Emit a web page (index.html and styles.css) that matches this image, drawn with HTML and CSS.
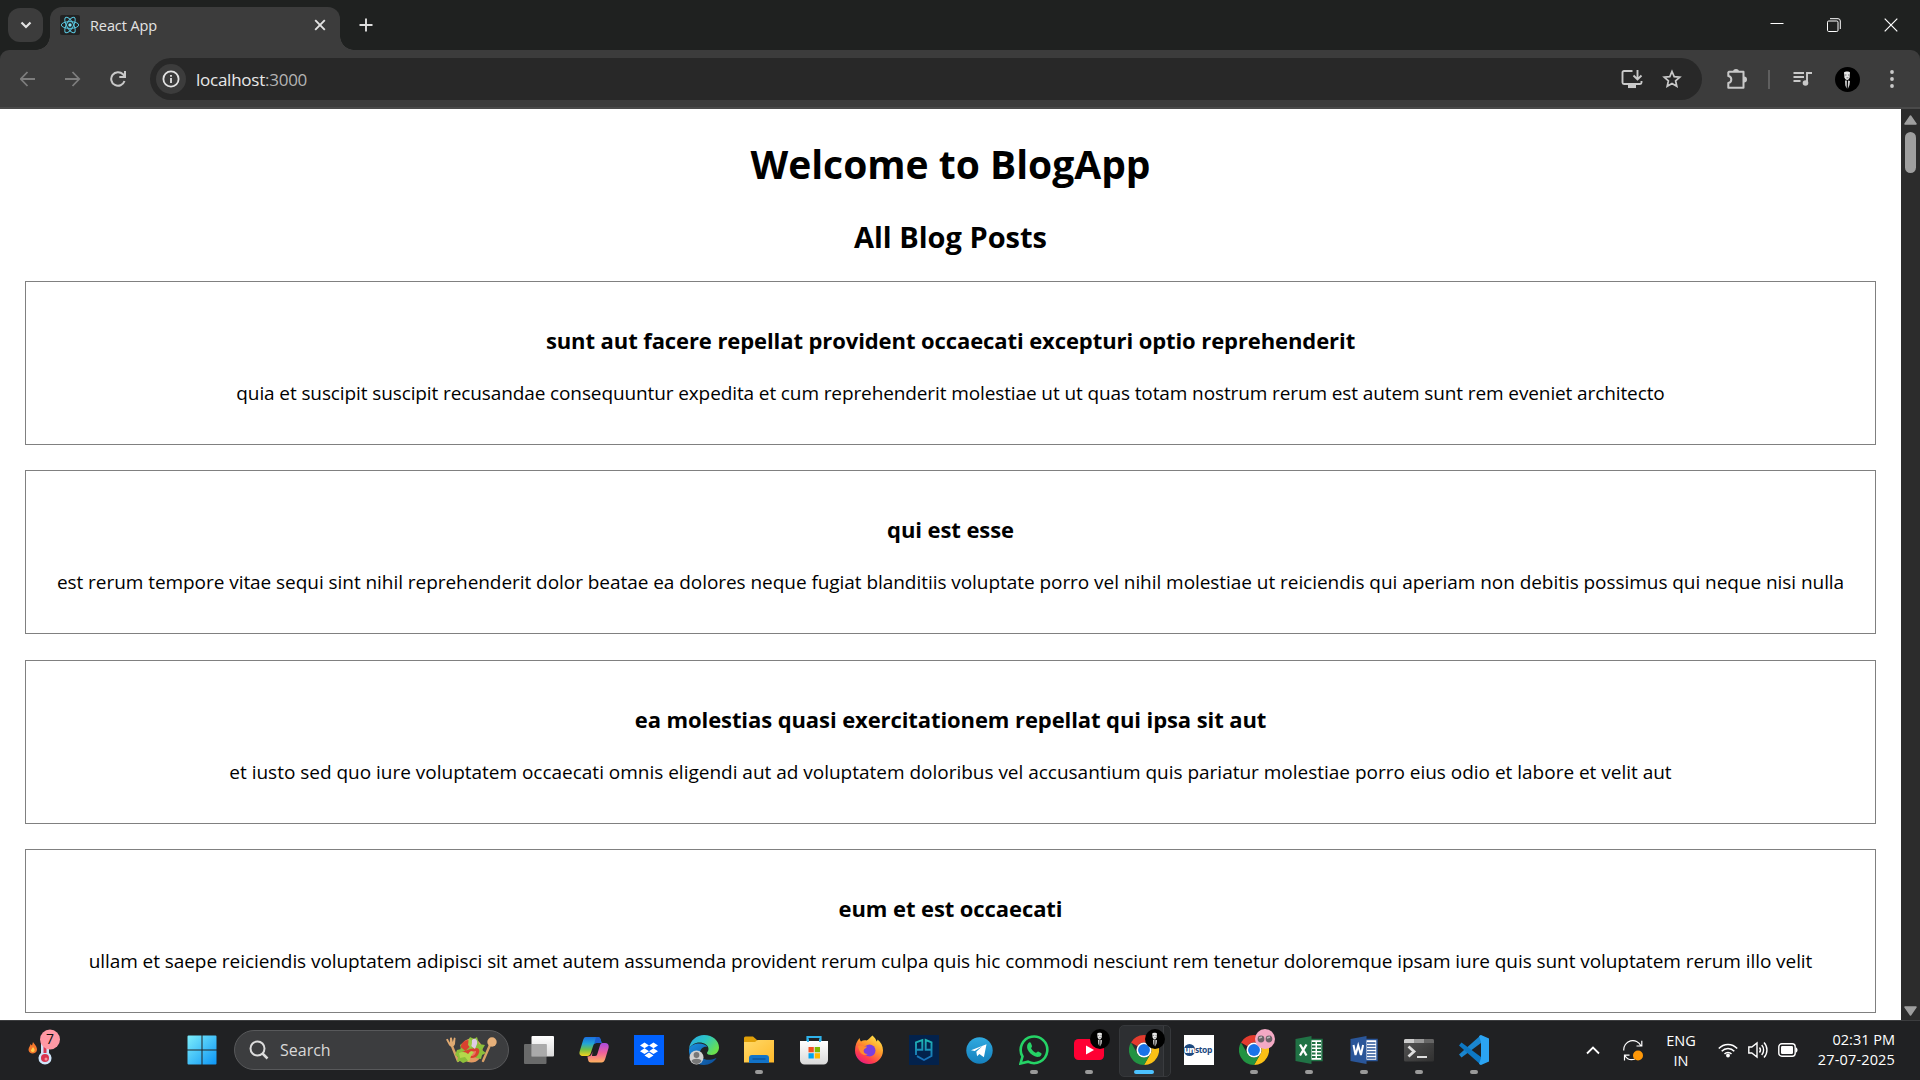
FILE: index.html
```html
<!DOCTYPE html>
<html lang="en">
<head>
<meta charset="utf-8">
<title>React App</title>
<link rel="stylesheet" href="styles.css">
</head>
<body>
<svg class="defs" width="0" height="0" aria-hidden="true">
  <defs>
    <linearGradient id="win" gradientUnits="userSpaceOnUse" x1="0" y1="0" x2="30" y2="30"><stop offset="0" stop-color="#7ff0fb"/><stop offset="1" stop-color="#0a93f5"/></linearGradient>
    <linearGradient id="cpA" x1="0" y1="0" x2="0" y2="1"><stop offset="0" stop-color="#1b6fe0"/><stop offset=".35" stop-color="#22a5d8"/><stop offset=".65" stop-color="#6cc04a"/><stop offset="1" stop-color="#f6d21d"/></linearGradient>
    <linearGradient id="cpB" x1="0" y1="0" x2="0" y2="1"><stop offset="0" stop-color="#a94be0"/><stop offset=".5" stop-color="#f0609a"/><stop offset="1" stop-color="#ffb25e"/></linearGradient>
    <linearGradient id="edA" x1="0" y1="0" x2="1" y2=".6"><stop offset="0" stop-color="#2aa6e8"/><stop offset=".5" stop-color="#2cc5c4"/><stop offset="1" stop-color="#6be04c"/></linearGradient>
    <linearGradient id="edB" x1="0" y1="0" x2="1" y2="1"><stop offset="0" stop-color="#1b8fe0"/><stop offset="1" stop-color="#0c4a94"/></linearGradient>
    <linearGradient id="fold" x1="0" y1="0" x2="1" y2="1"><stop offset="0" stop-color="#ffd968"/><stop offset="1" stop-color="#ffb92a"/></linearGradient>
    <linearGradient id="white" x1="0" y1="0" x2="0" y2="1"><stop offset="0" stop-color="#fff"/><stop offset="1" stop-color="#d9d9d9"/></linearGradient>
    <linearGradient id="ff" x1=".8" y1="0" x2=".2" y2="1"><stop offset="0" stop-color="#ffe94a"/><stop offset=".4" stop-color="#ff9a2b"/><stop offset=".75" stop-color="#ff3d4d"/><stop offset="1" stop-color="#e3158c"/></linearGradient>
    <linearGradient id="tg" x1="0" y1="0" x2="0" y2="1"><stop offset="0" stop-color="#2faae0"/><stop offset="1" stop-color="#1580bd"/></linearGradient>
    <linearGradient id="pg" gradientUnits="userSpaceOnUse" x1="0" y1="4" x2="0" y2="26"><stop offset="0" stop-color="#1fb8b4"/><stop offset="1" stop-color="#1668b8"/></linearGradient>
    <linearGradient id="term" x1="0" y1="0" x2="1" y2="1"><stop offset="0" stop-color="#555"/><stop offset="1" stop-color="#303030"/></linearGradient>
    <symbol id="chrome" viewBox="0 0 48 48">
      <path fill="#e33b2e" d="M24 0A24 24 0 0 1 44.8 12H24A12 12 0 0 0 13.6 18L3.2 12A24 24 0 0 1 24 0z"/>
      <path fill="#fbc116" d="M44.8 12A24 24 0 0 1 24 48L34.4 30A12 12 0 0 0 34.4 18L30 12z"/>
      <path fill="#229342" d="M3.2 12 13.6 30A12 12 0 0 0 34.4 30L24 48A24 24 0 0 1 3.2 12z"/>
      <circle cx="24" cy="24" r="12" fill="#fff"/><circle cx="24" cy="24" r="9.5" fill="#1a73e8"/>
    </symbol>
    <symbol id="person" viewBox="0 0 25 25">
      <circle cx="12.5" cy="12.5" r="12.5" fill="#000"/>
      <path fill="#e8e8e8" d="M9 5.500c1-1.200 5.200-1.200 6 0l-.3 4.800c-.4 1.500-1.400 2.700-2.500 2.700s-2.500-1.200-2.800-2.700z"/>
      <path stroke="#444" stroke-width=".7" d="M9.500 8h2M13 8h1.500M11.500 10.800h2"/>
      <path fill="#d0d0d0" d="M10 13.500h1.900l-.2 8-1.400-3zM13 13.500l2 .5-.5 4-1.700 4z"/>
    </symbol>
  </defs>
</svg>
<div class="screen">
  <header class="tabstrip">
    <button class="tab-search" aria-label="Search tabs"><svg width="12" height="8" viewBox="0 0 12 8" fill="none" stroke="#e3e3e3" stroke-width="2.200"><path d="M1.500 1.500 6 6l4.500-4.500"/></svg></button>
    <div class="tab">
      <svg class="favicon" width="20" height="20" viewBox="0 0 20 20"><rect width="20" height="20" rx="2" fill="#222"/><g fill="none" stroke="#58c4dc" stroke-width="1"><ellipse cx="10" cy="10" rx="8.700" ry="3.400"/><ellipse cx="10" cy="10" rx="8.700" ry="3.400" transform="rotate(60 10 10)"/><ellipse cx="10" cy="10" rx="8.700" ry="3.400" transform="rotate(120 10 10)"/></g><circle cx="10" cy="10" r="1.700" fill="#7de3f7"/></svg>
      <span class="tab-title">React App</span>
      <svg width="12" height="12" viewBox="0 0 12 12" stroke="#e3e3e3" stroke-width="1.900"><path d="M1.200 1.200l9.600 9.600M10.800 1.200l-9.600 9.600"/></svg>
    </div>
    <svg class="plus" width="14" height="14" viewBox="0 0 14 14" stroke="#dedede" stroke-width="1.900"><path d="M7 .5v13M.5 7h13"/></svg>
    <div class="window-buttons">
      <svg width="14" height="14" viewBox="0 0 14 14" stroke="#fff"><path d="M.5 5.500h13"/></svg>
      <svg width="14" height="14" viewBox="0 0 14 14" fill="none" stroke="#fff"><rect x=".5" y="3" width="10.500" height="10.500" rx="1.200"/><path d="M3 .7h8a2.300 2.300 0 0 1 2.300 2.300v8"/></svg>
      <svg width="14" height="14" viewBox="0 0 14 14" stroke="#fff" stroke-width="1.200"><path d="M.7.7l12.600 12.600M13.300.7.7 13.300"/></svg>
    </div>
  </header>
  <div class="toolbar">
    <div class="nav">
      <svg width="16" height="16" viewBox="0 0 16 16" fill="none" stroke="#7d7d7d" stroke-width="1.800"><path d="M15 8H1M7.500 1 .8 8l6.700 7"/></svg>
      <svg width="16" height="16" viewBox="0 0 16 16" fill="none" stroke="#7d7d7d" stroke-width="1.800"><path d="M0 8h14M7.500 1l6.700 7-6.700 7"/></svg>
      <svg width="16" height="16" viewBox="0 0 16 16" fill="none" stroke="#c9c9c9" stroke-width="2"><path d="M14.500 10A6.800 6.800 0 1 1 13 3.300L15 5.500M15 0v6H9.300"/></svg>
    </div>
    <div class="omnibox">
      <span class="info"><svg width="18" height="18" viewBox="0 0 18 18" fill="none" stroke="#e3e3e3" stroke-width="1.800"><circle cx="9" cy="9" r="7.600"/><path d="M9 8v5M9 5v1.800"/></svg></span>
      <span class="url">localhost<span class="port">:3000</span></span>
      <svg class="install" width="22" height="20" viewBox="0 0 22 20" fill="none" stroke="#c9c9c9" stroke-width="1.900"><path d="M11.500 2H3a1.500 1.500 0 0 0-1.500 1.500v10A1.500 1.500 0 0 0 3 15h16a1.500 1.500 0 0 0 1.500-1.500V12M16.500 1v8.500M12.500 6.500l4 4 4-4"/><path d="M7 17.300h8" stroke-width="3.500"/></svg>
      <svg class="star" width="20" height="20" viewBox="0 0 20 20" fill="none" stroke="#c9c9c9" stroke-width="1.700"><path d="M10 2.500l2.200 5.100 5.600.5-4.200 3.700 1.200 5.500-4.800-2.900-4.800 2.900 1.200-5.500L2.200 8.100l5.600-.5z"/></svg>
    </div>
    <svg class="puzzle" width="22" height="22" viewBox="0 0 22 22"><path d="M3 3.800h14.500v16H2.300V15c4-.8 4-6.200 0-7V4.500z" fill="none" stroke="#c9c9c9" stroke-width="2" stroke-linejoin="round"/><path d="M7 4a3 3 0 0 1 6 0zM18 8.500a3 3 0 0 1 0 6z" fill="#c9c9c9"/></svg>
    <span class="divider"></span>
    <svg class="queue" width="20" height="16" viewBox="0 0 20 16" fill="none" stroke="#c9c9c9" stroke-width="1.900"><path d="M.5 2h10.500M.5 6h10.500M.5 10h7M14 12V2h5"/><circle cx="12.500" cy="12" r="2.800" fill="#c9c9c9" stroke="none"/></svg>
    <svg class="avatar" width="25" height="25"><use href="#person"/></svg>
    <svg class="menu" width="4" height="18" viewBox="0 0 4 18" fill="#c9c9c9"><circle cx="2" cy="2" r="1.900"/><circle cx="2" cy="9" r="1.900"/><circle cx="2" cy="16" r="1.900"/></svg>
  </div>
  <div class="viewport">
    <main class="page">
      <h1>Welcome to BlogApp</h1>
      <h2>All Blog Posts</h2>
      <article class="post"><h3 class="snug">sunt aut facere repellat provident occaecati excepturi optio reprehenderit</h3><p class="tight">quia et suscipit suscipit recusandae consequuntur expedita et cum reprehenderit molestiae ut ut quas totam nostrum rerum est autem sunt rem eveniet architecto</p></article>
      <article class="post"><h3 class="snug">qui est esse</h3><p class="close">est rerum tempore vitae sequi sint nihil reprehenderit dolor beatae ea dolores neque fugiat blanditiis voluptate porro vel nihil molestiae ut reiciendis qui aperiam non debitis possimus qui neque nisi nulla</p></article>
      <article class="post"><h3 class="snug">ea molestias quasi exercitationem repellat qui ipsa sit aut</h3><p class="loose">et iusto sed quo iure voluptatem occaecati omnis eligendi aut ad voluptatem doloribus vel accusantium quis pariatur molestiae porro eius odio et labore et velit aut</p></article>
      <article class="post"><h3 class="snug">eum et est occaecati</h3><p class="near">ullam et saepe reiciendis voluptatem adipisci sit amet autem assumenda provident rerum culpa quis hic commodi nesciunt rem tenetur doloremque ipsam iure quis sunt voluptatem rerum illo velit</p></article>
    </main>
    <div class="scrollbar">
      <svg width="13" height="10" viewBox="0 0 13 10"><path d="M6.500 1 12 9H1z" fill="#9f9f9f" stroke="#9f9f9f" stroke-linejoin="round" stroke-width="1.500"/></svg>
      <span class="thumb"></span>
      <svg class="down" width="13" height="10" viewBox="0 0 13 10"><path d="M6.500 9 12 1H1z" fill="#9f9f9f" stroke="#9f9f9f" stroke-linejoin="round" stroke-width="1.500"/></svg>
    </div>
  </div>
  <footer class="taskbar">
    <div class="widgets">
      <svg width="34" height="38" viewBox="0 0 34 38">
        <path d="M5 13c1 2 4 4 4 7.500A4.300 4.300 0 0 1 .5 21c0-3 2-4 2-6l1.500 1.500z" fill="#f4772d"/><path d="M5 18c1 1.500 2 2.500 1.500 4a2 2 0 0 1-3.700-.5z" fill="#ffcf4a"/>
        <path d="M13 10h8v14a6.500 6.500 0 1 1-8 0z" fill="#cfe5fa"/><path d="M15.500 10h3v14h-3z" fill="#d8344f"/><circle cx="17" cy="29" r="4" fill="#d8344f"/><circle cx="18" cy="30" r="1.500" fill="#f3909a"/>
        <circle cx="22" cy="10.500" r="10" fill="#ff98a4"/>
      </svg>
      <span class="count">7</span>
    </div>
    <div class="slot"><svg width="30" height="30" viewBox="0 0 30 30" fill="url(#win)"><path d="M.5 1.500a1 1 0 0 1 1-1h13v14H.500zM15.500.5h13a1 1 0 0 1 1 1v13h-14zM.5 15.500h14v14h-13a1 1 0 0 1-1-1zM15.500 15.500h14v13a1 1 0 0 1-1 1h-13z"/></svg></div>
    <div class="search">
      <svg width="20" height="20" viewBox="0 0 20 20" fill="none" stroke="#dcdcdc" stroke-width="2"><circle cx="8.500" cy="8.500" r="7"/><path d="M13.500 13.500l5 5" stroke-width="2.500"/></svg>
      <span>Search</span>
      <svg class="salad" width="52" height="28" viewBox="0 0 52 28">
        <g stroke="#d9a066" stroke-width="2.400" fill="#e0aa72" stroke-linecap="round"><path d="M7 10l6 15M45 9l-7 16"/></g>
        <path d="M1 3.500l1.800-.7 2 4 .2-5 1.800-.3 1 4.500L9 1.500l1.500.5-.5 6c-1 3.500-4.500 3.500-6 1z" fill="#e0aa72"/><circle cx="47" cy="6" r="4.700" fill="#e6b07a"/>
        <ellipse cx="26.500" cy="14.500" rx="11" ry="12" fill="#e39a62"/>
        <path d="M12 14l4-1-1-4 4-3 2 4 4-9 4 2 3-2 2 7 6 1-3 5 4 3-4 2-1 4-5-1-4-5-5 4 1 4-5 2-3-2-3 1 1-5-3-2z" fill="#8cbf3a"/>
        <path d="M15.500 11a8 8 0 0 1 8-7l1 7-4 4z" fill="#d8412f"/><path d="M17 16l8-3 6-1c5 0 4 6 0 9-5 2-8 0-9 0z" fill="#d8412f"/><path d="M24 16l7-1c0 3-2 5-5 5z" fill="#ec7660"/>
        <path d="M27 4c3-3 6 0 5 4l-2 5-4-3z" fill="#e0cbe4"/><path d="M14 17c4-2 7-1 9 1l3-3 3 1-3 4-2 6-4-5-5 1z" fill="#b4d84b"/><path d="M24 2l3 4-1 6-3-3z" fill="#9fce45"/>
      </svg>
    </div>
    <nav class="apps">
      <div class="slot"><svg width="30" height="28" viewBox="0 0 30 28"><rect x="7.500" width="22.500" height="20.500" rx="1" fill="url(#white)"/><rect y="8" width="22.500" height="20" rx="1" fill="#777" opacity=".85"/><path d="M7.500 8h15v12.500h-15z" fill="#aaa"/></svg></div>
      <div class="slot"><svg width="30" height="28" viewBox="0 0 30 28"><path d="M7 1h12c1.500 0 2.300 1 2.800 3l.8 3h-5c-2 0-3 1-3.500 3l-2.300 7c-.7 2-1.500 3-3.500 3H4c-3.500 0-4-2.500-3.200-5L4 4.500C4.700 2 5.500 1 7 1z" fill="url(#cpA)"/><path d="M23.500 7H26c3.500 0 4.200 2.500 3.400 5.500L26.500 22c-.8 3-2 4.500-4 4.500H12c-2 0-2.600-1-3-3l-.6-3c2.600 0 4-1 4.600-3.500l.5-1.500L13 20h3c1.500 0 2-.8 2.500-2.500l2.300-7.500c.6-2 1.200-3 2.700-3z" fill="url(#cpB)"/><path d="M17 1h2c1.500 0 2.300 1 2.800 3l.8 3h-5c-1 0-1.800.3-2.400 1z" fill="#1c5fd0"/></svg></div>
      <div class="slot"><svg width="30" height="30" viewBox="0 0 30 30"><path d="M0 0h30v30H0z" fill="#0061fe"/><path d="M10.500 7.500l4.500 2.900-4.500 2.900L6 10.400zM19.500 7.500l4.500 2.900-4.500 2.900-4.500-2.900zM10.500 13.300l4.500 2.900-4.500 2.900L6 16.200zM19.500 13.300l4.500 2.900-4.500 2.900-4.500-2.900zM15 17.500l4.500 2.900-4.500 2.900-4.500-2.900z" fill="#fff"/></svg></div>
      <div class="slot"><svg width="30" height="30" viewBox="0 0 30 30"><path d="M0 14C1 5 8 0 15 0c9 0 15 6 15 12.500 0 4.500-3.500 7.500-7.500 7.500-3 0-4.500-1-4.500-2s1.500-1.500 1.500-4C19.500 10 15 7.500 10.500 7.500 6 7.500 2 10 0 14z" fill="url(#edA)"/><path d="M0 14c2-4 6-5.500 10-5.500 4 0 7 1.500 8.500 3.500-4-1-7.500 2-7.500 6 0 6 7 9 16.500 5C25 27 20.500 30 15 30 6 30-.8 23 0 14z" fill="url(#edB)"/><circle cx="7.500" cy="22.500" r="7" fill="#d0d0d0"/><circle cx="7.500" cy="20" r="2.900" fill="#777"/><path d="M2.500 26c1-3 9-3 10 0-2 4-8 4-10 0z" fill="#777"/></svg></div>
      <div class="slot running"><svg width="30" height="28" viewBox="0 0 30 28"><path d="M0 2a1.500 1.500 0 0 1 1.500-1.500H9L13 4v6H0z" fill="#e0a008"/><path d="M0 6h11l2.500-2H30v22.500H0z" fill="url(#fold)"/><path d="M5 27v-5a3 3 0 0 1 3-3h14a3 3 0 0 1 3 3v5z" fill="#1273c8"/><path d="M8.500 23h13" stroke="#0a4d94" stroke-width="1.200"/></svg></div>
      <div class="slot"><svg width="30" height="30" viewBox="0 0 30 30"><path d="M8.500 7V2h13v5" fill="none" stroke="#2fb2ea" stroke-width="2.200"/><path d="M1 6h28v19a4.500 4.500 0 0 1-4.500 4.500h-19A4.500 4.500 0 0 1 1 25z" fill="url(#white)"/><path d="M9 7V4M21 7V4" stroke="#2fb2ea" stroke-width="1.800"/><path d="M9.500 12h5.300v5.300H9.500z" fill="#f25022"/><path d="M15.700 12H21v5.300h-5.300z" fill="#7fba00"/><path d="M9.500 18.200h5.300v5.300H9.500z" fill="#00a4ef"/><path d="M15.700 18.200H21v5.300h-5.300z" fill="#ffb900"/></svg></div>
      <div class="slot"><svg width="30" height="30" viewBox="0 0 30 30"><path d="M18.500.5c2 2 3.500 3.500 4 6 .8-.5 1-1.200 1-2C27 7 29 11 29 15.500 29 23 23 29 15 29S1 23 1 15.500C1 10 3 6 5.500 3c.3 1.500.7 2.500 1.500 3.500 1.500-1 3.500-1.500 5.500-1C14.500 5 16 2.500 18.500.5z" fill="url(#ff)"/><circle cx="15.500" cy="15.500" r="6" fill="#7a3fe0"/><path d="M4 11c4-1.500 5 1 9 .5-.5 2-3 2-3.500 4 0 2.500 2 4 4.500 3.500-5 3-9-1.500-10-8z" fill="#ff8a30"/></svg></div>
      <div class="slot"><svg width="30" height="30" viewBox="0 0 30 30"><path d="M0 0h30v30H0z" fill="#03224c"/><path d="M7 20V7.300L13.300 5v9.800H7M22.500 14.800h-5.800V5l5.800 2.300V21L15 25l-7-3.800" fill="none" stroke="url(#pg)" stroke-width="1.900"/></svg></div>
      <div class="slot"><svg width="27" height="27" viewBox="0 0 27 27"><circle cx="13.500" cy="13.500" r="13.200" fill="url(#tg)"/><path d="M5 13.300l15.500-6-2.600 13-4.500-3.300-2.300 2.200-.8-4.500 6.200-5.600-7.800 4.900z" fill="#fff"/></svg></div>
      <div class="slot running"><svg width="30" height="30" viewBox="0 0 30 30"><path d="M1.500 28.500l2-7A13.300 13.300 0 1 1 9 26.700z" fill="none" stroke="#25d366" stroke-width="2.600"/><path d="M9.500 8c1-1 2-.8 2.500.3l1 2.600c.2 1-1.200 1.800-.8 2.600 1 2 2.500 3.300 4.500 4.200 1 .4 1.500-1.500 2.500-1.200l2.800 1.400c1 .5.500 2-.2 2.800-1.300 1.500-3.800 1.500-6 .5-3.300-1.400-5.800-3.800-7.300-7-.8-2.300-.5-4.700 1-6.200z" fill="#25d366"/></svg></div>
      <div class="slot running"><svg width="30" height="22" viewBox="0 0 30 22"><rect width="30" height="21" rx="4.500" fill="#ff0033"/><path d="M12 6.500l8 4.500-8 4.500z" fill="#fff"/></svg><svg class="badge" width="20" height="20" viewBox="0 0 25 25"><use href="#person"/></svg></div>
      <div class="slot running active"><svg width="30" height="30"><use href="#chrome"/></svg><svg class="badge" width="20" height="20" viewBox="0 0 25 25"><use href="#person"/></svg></div>
      <div class="slot"><span class="unstop"><b>un</b>stop</span></div>
      <div class="slot running"><svg width="30" height="30"><use href="#chrome"/></svg><svg class="badge" width="20" height="20" viewBox="0 0 20 20"><circle cx="10" cy="10" r="10" fill="#f3a9c4"/><circle cx="6" cy="10" r="3.400" fill="#6b6268"/><circle cx="14" cy="10" r="3.400" fill="#6b6268"/><path d="M4 9l3-1M12 9l3-1" stroke="#bbb" stroke-width="1.500"/></svg></div>
      <div class="slot running"><svg class="office" width="28" height="28" viewBox="0 0 28 28"><path d="M15 3.500h12v21H15z" fill="#fff" stroke="#207245" stroke-width="1.500"/><path d="M17 7h3.500M17 10.500h3.500M17 14h3.500M17 17.500h3.500M17 21h3.500M22 7h4M22 10.500h4M22 14h4M22 17.500h4M22 21h4" stroke="#207245" stroke-width="2"/><path d="M.5 3L16.500 0v28L.5 25z" fill="#207245"/><path d="M5 8.500l6.500 11M11.500 8.500L5 19.500" stroke="#fff" stroke-width="2.300"/></svg></div>
      <div class="slot running"><svg class="office" width="28" height="28" viewBox="0 0 28 28"><path d="M15 3.500h12v21H15z" fill="#fff" stroke="#2a5699" stroke-width="1.500"/><path d="M17 7h8.500M17 10h8.500M17 13h8.500M17 16h8.500M17 19h8.500M17 22h8.500" stroke="#2a5699" stroke-width="1.500"/><path d="M.5 3L16.500 0v28L.5 25z" fill="#2a5699"/><path d="M3.500 9l2 10 2.700-9.500 2.700 9.500 2.200-10" fill="none" stroke="#fff" stroke-width="2"/></svg></div>
      <div class="slot running"><svg width="30" height="24" viewBox="0 0 30 24"><rect y="1" width="30" height="22.500" rx="1.500" fill="url(#term)"/><path d="M0 5V2.500A1.500 1.500 0 0 1 1.500 1H10v4z" fill="#ccc"/><path d="M10 1h10v4H10z" fill="#999"/><path d="M20 1h8.500A1.500 1.500 0 0 1 30 2.500V5H20z" fill="#666"/><path d="M4.500 8.500l5.500 5-5.500 5" fill="none" stroke="#ddd" stroke-width="2.800"/><path d="M13 19h10" stroke="#ddd" stroke-width="2"/></svg></div>
      <div class="slot running"><svg width="30" height="30" viewBox="0 0 30 30"><path d="M22 0L0 19.500l2.500 3L22 8z" fill="#1a86cf"/><path d="M22 30L0 10.500l2.500-3L22 22z" fill="#0d78c4"/><path d="M22 0l8 3.500v23L22 30l-2-1 2-6V7l-2-6z" fill="#2ba4f2"/></svg></div>
    </nav>
    <div class="tray">
      <svg class="chev" width="14" height="9" viewBox="0 0 14 9" fill="none" stroke="#fff" stroke-width="1.800"><path d="M1 7.500L7 1.500l6 6"/></svg>
      <svg class="sync" width="20" height="21" viewBox="0 0 20 21" fill="none" stroke="#fff" stroke-width="1.200"><path d="M.8 10.500A9 9 0 0 1 18 6M18.800.8V6H13.500M12 19C8 20.500 4 19 1.800 15.500M1.500 20.500V15.200H6.500"/><circle cx="15" cy="15.500" r="5" fill="#ff9808" stroke="none"/></svg>
      <div class="lang"><span>ENG</span><span>IN</span></div>
      <svg class="wifi" width="20" height="16" viewBox="0 0 20 16" fill="none" stroke="#fff" stroke-width="1.500"><path d="M.8 6.500a12.500 12.500 0 0 1 18.400 0M3.700 9.300a8.500 8.500 0 0 1 12.600 0M6.500 12a4.800 4.800 0 0 1 7 0"/><circle cx="10" cy="13.500" r="1.900" fill="#fff" stroke="none"/></svg>
      <svg class="sound" width="20" height="18" viewBox="0 0 20 18" fill="none" stroke="#fff" stroke-width="1.400"><path d="M.8 6h3L9 2v14l-5.200-4h-3zM11.500 6.500a4 4 0 0 1 0 5M13.700 4a7.500 7.500 0 0 1 0 10M16 1.500a11 11 0 0 1 0 15"/></svg>
      <svg class="battery" width="20" height="14" viewBox="0 0 20 14"><rect x=".8" y=".8" width="16.400" height="12.400" rx="3" fill="none" stroke="#fff" stroke-width="1.400"/><rect x="3" y="3" width="12" height="8" rx="1.200" fill="#fff"/><path d="M18 4.500c2 .5 2 4.500 0 5z" fill="#fff"/></svg>
      <div class="clock"><span>02:31 PM</span><span class="date">27-07-2025</span></div>
    </div>
  </footer>
</div>
</body>
</html>
```
FILE: styles.css
```css
* { box-sizing: border-box; }
body { margin: 0; font-family: "Open Sans", "Noto Sans", sans-serif; background: #fff; overflow: hidden; }
svg { display: block; flex: none; }
.defs { position: absolute; }
.screen { width: 1920px; height: 1080px; display: flex; flex-direction: column; background: #1f2120; }

.tabstrip { height: 50px; display: flex; align-items: flex-start; padding: 7px 22px 0 8px; flex: none; }
.tab-search { width: 35px; height: 34px; margin-top: 1px; padding: 0; border: 0; border-radius: 12px; background: #3c3c3c; display: flex; align-items: center; justify-content: center; }
.tab { position: relative; width: 290px; height: 43px; margin-left: 7px; padding: 0 14px 7px 10px; border-radius: 12px 12px 0 0; background: #3c3c3c; display: flex; align-items: center; }
.tab::before, .tab::after { content: ""; position: absolute; bottom: 0; width: 14px; height: 14px; }
.tab::before { left: -14px; background: radial-gradient(circle at 0 0, transparent 13.500px, #3c3c3c 14px); }
.tab::after { right: -14px; background: radial-gradient(circle at 100% 0, transparent 13.500px, #3c3c3c 14px); }
.tab-title { margin-left: 10px; margin-right: auto; color: #e3e3e3; font-size: 14.500px; letter-spacing: -.1px; white-space: nowrap; }
.plus { margin: 11px 0 0 19px; }
.window-buttons { margin: 11px 0 0 auto; display: flex; gap: 43px; }

.toolbar { height: 59px; flex: none; background: #3c3c3c; border-radius: 9px 9px 0 0; box-shadow: inset 0 -2px 0 #4a4a4a; display: flex; align-items: center; padding: 0 26px 1px 20px; }
.nav { display: flex; gap: 29px; width: 130px; }
.omnibox { width: 1552px; height: 42px; border-radius: 21px; background: #282828; display: flex; align-items: center; padding: 0 20px 0 6px; }
.info { width: 30px; height: 30px; border-radius: 50%; background: #3c3c3c; display: flex; align-items: center; justify-content: center; }
.url { margin-left: 10px; color: #e8e8e8; font-size: 17px; letter-spacing: -.25px; white-space: nowrap; }
.port { color: #b4b4b4; }
.install { margin-left: auto; }
.star { margin-left: 19px; }
.puzzle { margin-left: 24px; }
.divider { width: 2px; height: 19px; background: #5f5f5f; margin-left: 20px; }
.queue { margin-left: 23px; }
.avatar { margin-left: 22px; }
.menu { margin-left: auto; }

.viewport { height: 911px; flex: none; display: flex; overflow: hidden; background: #fff; }
.page { width: 1901px; padding: 28px 25px 0; text-align: center; color: #000; }
.page h1, .page h2, .page h3, .page p { margin: 0; white-space: nowrap; }
.page h1 { font-size: 39px; line-height: 54px; }
.page h2 { font-size: 29px; line-height: 40px; margin-top: 26px; }
.post { height: 164px; border: 1px solid #808080; padding-top: 42px; margin-bottom: 25.200px; }
.page h2 + .post { margin-top: 24.200px; }
.post h3 { font-size: 22px; line-height: 32px; }
.post p { font-size: 19px; line-height: 28px; margin-top: 23px; }
.post .snug { letter-spacing: -.09px; }
.post .tight { letter-spacing: -.11px; }
.post .close { letter-spacing: -.052px; }
.post .loose { letter-spacing: -.014px; }
.post .near { letter-spacing: -.07px; }
.scrollbar { width: 19px; background: #2c2c2c; display: flex; flex-direction: column; align-items: center; padding: 6px 0 4px; }
.thumb { width: 11px; height: 41px; margin-top: 7px; border-radius: 6px; background: #9f9f9f; }
.down { margin-top: auto; }

.taskbar { height: 60px; flex: none; background: #202123; border-top: 1px solid #3c3d3f; display: flex; align-items: center; color: #fff; padding: 0 25px 1px 0; }
.widgets { position: relative; width: 174.500px; padding-left: 28px; height: 43px; }
.count { position: absolute; left: 40px; top: 0; width: 20px; text-align: center; color: #111; font-size: 14px; line-height: 20px; }
.slot { position: relative; width: 55px; height: 58px; display: flex; align-items: center; justify-content: center; flex: none; }
.search { width: 275px; height: 40px; margin: 0 2.500px 0 4.500px; border-radius: 20px; background: #3c3d3f; border: 1px solid #58595b; display: flex; align-items: center; padding: 0 11px 0 14px; font-size: 16px; color: #d8d8d8; flex: none; }
.search span { margin-left: 11px; }
.salad { margin-left: auto; }
.apps { display: flex; }
.running::after { content: ""; position: absolute; left: 23.500px; bottom: 5px; width: 8px; height: 4px; border-radius: 2px; background: #9a9a9a; }
.active::before { content: ""; position: absolute; left: 2.500px; top: 4px; width: 50px; height: 50px; border-radius: 5px; background: linear-gradient(90deg, #2d2f32 43px, #3a3c3f 43px 44px, #26282a 44px); border: 1px solid #36383b; }
.active > svg { position: relative; }
.active::after { left: 17.500px; width: 20px; background: #4cc2ff; }
.slot > .badge { position: absolute; right: 6.500px; top: 8px; }
.unstop { width: 30px; height: 30px; background: #fff; color: #1c4980; font: bold 8.500px/30px "Open Sans", sans-serif; letter-spacing: -.4px; display: flex; align-items: center; overflow: hidden; }
.unstop b { width: 11px; height: 12px; line-height: 11px; border-radius: 6px; background: #1c4980; color: #fff; flex: none; }
.tray { margin-left: auto; display: flex; align-items: center; }
.sync { margin-left: 23px; }
.lang { width: 56px; margin-left: 10px; padding-top: 1px; text-align: center; font-size: 14.500px; line-height: 20px; }
.lang span, .clock span { display: block; }
.wifi { margin-left: 9px; }
.sound { margin-left: 10px; }
.battery { margin-left: 10px; }
.clock { width: 97px; text-align: right; font-size: 14.500px; line-height: 20px; }
.clock .date { letter-spacing: .15px; }
```
